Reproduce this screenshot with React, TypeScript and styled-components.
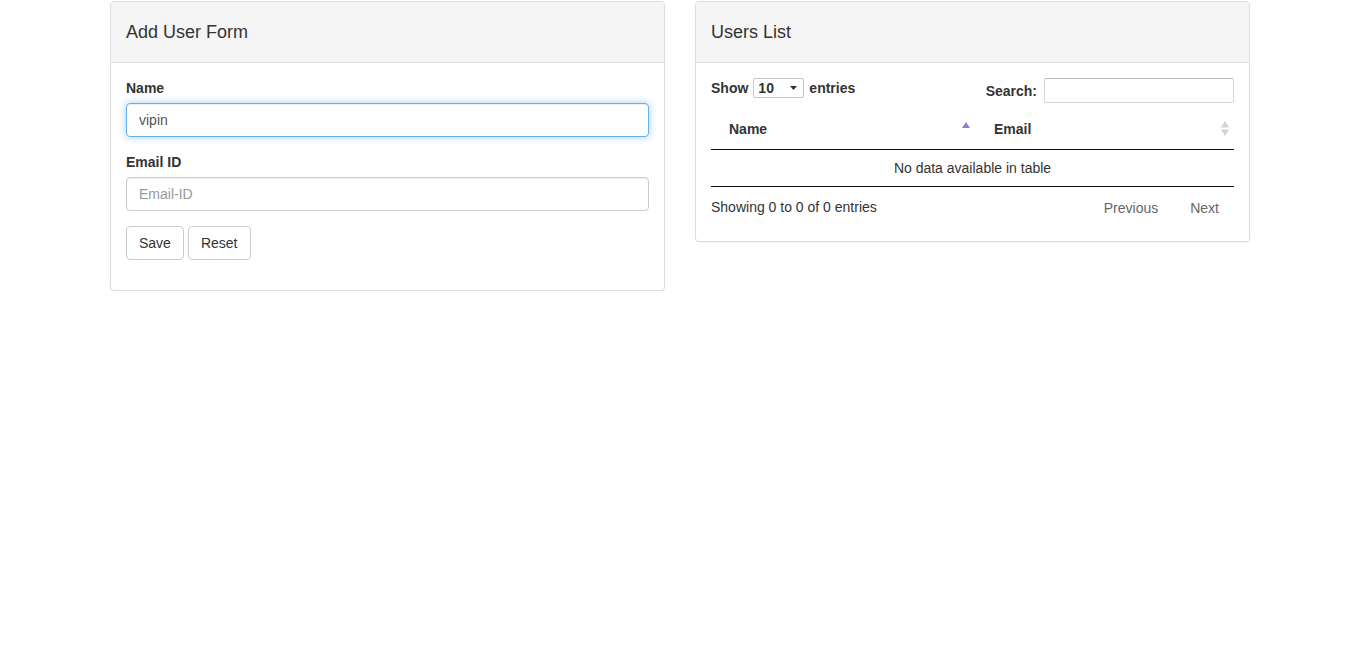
import React from "react";
import styled, { createGlobalStyle } from "styled-components";

const GlobalStyle = createGlobalStyle`
  * { box-sizing: border-box; }
  html, body { margin: 0; padding: 0; background: #fff; }
  body {
    font-family: "Liberation Sans", Arial, Helvetica, sans-serif;
    font-size: 14px;
    line-height: 20px;
    color: #333;
  }
`;

const Page = styled.div`
  padding-top: 1px;
`;

const Container = styled.div`
  width: 1140px;
  margin: 0 auto;
  display: grid;
  grid-template-columns: 555px 555px;
  column-gap: 30px;
  align-items: start;
`;

const Panel = styled.section`
  background: #fff;
  border: 1px solid #ddd;
  border-radius: 4px;
  box-shadow: 0 1px 1px rgba(0, 0, 0, 0.05);
`;

const PanelHeading = styled.div`
  padding: 20px 15px;
  background: #f5f5f5;
  border-bottom: 1px solid #ddd;
  border-radius: 3px 3px 0 0;
`;

const PanelTitle = styled.h3`
  margin: 0;
  font-size: 18px;
  line-height: 20px;
  font-weight: 400;
  color: #333;
`;

const PanelBody = styled.div`
  padding: 15px;
`;

const FormGroup = styled.div`
  margin-bottom: 15px;
`;

const Label = styled.label`
  display: block;
  font-weight: bold;
  margin-bottom: 5px;
`;

const TextInput = styled.input<{ $focused?: boolean }>`
  display: block;
  width: 100%;
  height: 34px;
  padding: 6px 12px;
  font-family: inherit;
  font-size: 14px;
  line-height: 20px;
  color: #555;
  background: #fff;
  border: 1px solid ${(p) => (p.$focused ? "#66afe9" : "#ccc")};
  border-radius: 4px;
  outline: none;
  box-shadow: ${(p) =>
    p.$focused
      ? "inset 0 1px 1px rgba(0,0,0,.075), 0 0 8px rgba(102,175,233,.6)"
      : "inset 0 1px 1px rgba(0,0,0,.075)"};
  &::placeholder {
    color: #999;
  }
`;

const ButtonRow = styled.div`
  display: flex;
  gap: 4px;
`;

const Button = styled.button`
  padding: 6px 12px;
  font-family: inherit;
  font-size: 14px;
  line-height: 20px;
  color: #333;
  background: #fff;
  border: 1px solid #ccc;
  border-radius: 4px;
`;

const ControlsRow = styled.div`
  display: flex;
  justify-content: space-between;
  align-items: flex-start;
`;

const LengthControl = styled.label`
  display: flex;
  align-items: center;
  gap: 5px;
  height: 20px;
  font-weight: bold;
`;

const SelectWrap = styled.span`
  position: relative;
  display: inline-flex;
`;

const Select = styled.select`
  appearance: none;
  -webkit-appearance: none;
  width: 51px;
  height: 20px;
  padding: 0 0 0 4px;
  font-family: inherit;
  font-size: 14px;
  font-weight: bold;
  line-height: 18px;
  color: #333;
  background: #fff;
  border: 1px solid #c8c8c8;
  border-radius: 2px;
  outline: none;
`;

const Caret = styled.svg`
  position: absolute;
  right: 7px;
  top: 8px;
  pointer-events: none;
`;

const FilterControl = styled.label`
  display: flex;
  align-items: center;
  gap: 7px;
  font-weight: bold;
  padding-top: 1px;
`;

const SearchInput = styled.input`
  width: 190px;
  height: 25px;
  padding: 4px;
  margin-top: -1px;
  font-family: inherit;
  font-size: 14px;
  border: 1px solid #d4d4d4;
  border-top-color: #b8b8b8;
  border-radius: 2px;
  outline: none;
  background: transparent;
`;

const Table = styled.table`
  width: 100%;
  margin-top: 6px;
  border-collapse: separate;
  border-spacing: 0;
`;

const HeaderCell = styled.th<{ $width?: number }>`
  position: relative;
  padding: 10px 18px;
  text-align: left;
  font-weight: bold;
  border-bottom: 1px solid #111;
  ${(p) => (p.$width ? `width: ${p.$width}px;` : "")}
`;

const SortIcon = styled.svg<{ $top: number; $right: number }>`
  position: absolute;
  top: ${(p) => p.$top}px;
  right: ${(p) => p.$right}px;
`;

const EmptyCell = styled.td`
  padding: 8px 10px;
  text-align: center;
  border-bottom: 1px solid #111;
`;

const Footer = styled.div`
  display: flex;
  justify-content: space-between;
  align-items: flex-start;
`;

const Info = styled.div`
  padding-top: 10px;
`;

const Paginate = styled.div`
  display: flex;
  gap: 2px;
  padding-top: 3px;
`;

const PageButton = styled.span`
  padding: 7px 14px;
  line-height: 20px;
  border: 1px solid transparent;
  color: #666;
`;

export default function App() {
  return (
    <Page>
      <GlobalStyle />
      <Container>
        <Panel>
          <PanelHeading>
            <PanelTitle>Add User Form</PanelTitle>
          </PanelHeading>
          <PanelBody>
            <FormGroup>
              <Label>Name</Label>
              <TextInput $focused defaultValue="vipin" />
            </FormGroup>
            <FormGroup>
              <Label>Email ID</Label>
              <TextInput placeholder="Email-ID" />
            </FormGroup>
            <FormGroup>
              <ButtonRow>
                <Button>Save</Button>
                <Button>Reset</Button>
              </ButtonRow>
            </FormGroup>
          </PanelBody>
        </Panel>

        <Panel>
          <PanelHeading>
            <PanelTitle>Users List</PanelTitle>
          </PanelHeading>
          <PanelBody>
            <ControlsRow>
              <LengthControl>
                Show
                <SelectWrap>
                  <Select defaultValue="10">
                    <option value="10">10</option>
                    <option value="25">25</option>
                    <option value="50">50</option>
                    <option value="100">100</option>
                  </Select>
                  <Caret width="7" height="4" viewBox="0 0 7 4">
                    <polygon points="0,0 7,0 3.5,4" fill="#333" />
                  </Caret>
                </SelectWrap>
                entries
              </LengthControl>
              <FilterControl>
                Search:
                <SearchInput type="search" />
              </FilterControl>
            </ControlsRow>
            <Table>
              <thead>
                <tr>
                  <HeaderCell $width={265}>
                    Name
                    <SortIcon $top={13} $right={6} width="8" height="6" viewBox="0 0 8 6">
                      <polygon points="0,6 4,0 8,6" fill="#8484d8" />
                    </SortIcon>
                  </HeaderCell>
                  <HeaderCell>
                    Email
                    <SortIcon $top={12} $right={5} width="8" height="15" viewBox="0 0 8 15">
                      <polygon points="0,6.5 4,0 8,6.5" fill="#d2d2d2" />
                      <polygon points="0,8.5 8,8.5 4,15" fill="#d2d2d2" />
                    </SortIcon>
                  </HeaderCell>
                </tr>
              </thead>
              <tbody>
                <tr>
                  <EmptyCell colSpan={2}>No data available in table</EmptyCell>
                </tr>
              </tbody>
            </Table>
            <Footer>
              <Info>Showing 0 to 0 of 0 entries</Info>
              <Paginate>
                <PageButton>Previous</PageButton>
                <PageButton>Next</PageButton>
              </Paginate>
            </Footer>
          </PanelBody>
        </Panel>
      </Container>
    </Page>
  );
}
